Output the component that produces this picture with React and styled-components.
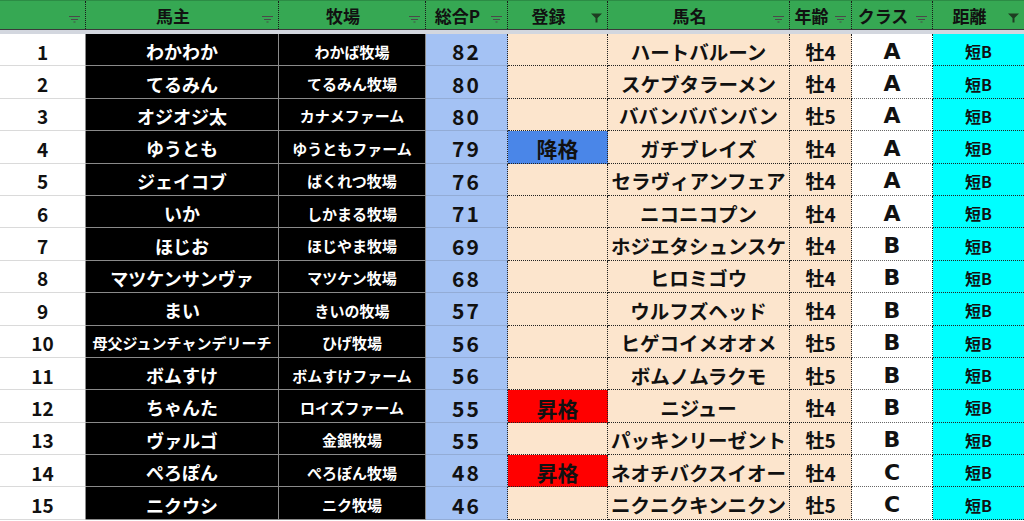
import React from 'react';
import styled, { createGlobalStyle } from 'styled-components';

const GlobalStyle = createGlobalStyle`
  html, body {
    margin: 0;
    padding: 0;
    background: #ffffff;
    overflow: hidden;
  }
  body {
    font-family: "Noto Sans CJK JP", "Noto Sans", sans-serif;
  }
`;

// column layout: widths and per-column cell look
const COLS = [
  { key: 'no', title: '', w: 86, bg: '#ffffff', size: 19, bottom: '1px solid #dadada', right: '1px solid #8a8a8a', icon: 'lines' },
  { key: 'owner', title: '馬主', w: 193, bg: '#000000', color: '#fff', size: 18, bottom: '1px solid #8a8a8a', right: '1px solid #8a8a8a', icon: 'lines' },
  { key: 'farm', title: '牧場', w: 147, bg: '#000000', color: '#fff', size: 15, bottom: '1px solid #8a8a8a', right: '1px solid #8a8a8a', icon: 'lines' },
  { key: 'pts', title: '総合P', w: 82, bg: '#a4c2f4', size: 21, bottom: '1px solid #93acd6', right: '1px dotted #222', icon: 'lines' },
  { key: 'reg', title: '登録', w: 100, bg: '#fce5cd', size: 21, bottom: '1px dotted #222', right: '1px dotted #222', icon: 'funnel' },
  { key: 'name', title: '馬名', w: 182, bg: '#fce5cd', size: 19.5, bottom: '1px dotted #222', right: '1px dotted #222', icon: 'lines' },
  { key: 'age', title: '年齢', w: 62, bg: '#fce5cd', size: 19, bottom: '1px dotted #222', right: '1px dotted #222', icon: 'lines' },
  { key: 'cls', title: 'クラス', w: 81, bg: '#ffffff', size: 22, bottom: '1px dotted #666', right: '1px dotted #222', icon: 'lines', latin: true },
  { key: 'dist', title: '距離', w: 91, bg: '#00ffff', size: 16, bottom: '1px dotted #222', right: 'none', icon: 'funnel' },
];

const ROWS = [
  [1, 'わかわか', 'わかば牧場', 82, '', 'ハートバルーン', '牡4', 'A', '短B'],
  [2, 'てるみん', 'てるみん牧場', 80, '', 'スケブタラーメン', '牡4', 'A', '短B'],
  [3, 'オジオジ太', 'カナメファーム', 80, '', 'ババンババンバン', '牡5', 'A', '短B'],
  [4, 'ゆうとも', 'ゆうともファーム', 79, '降格', 'ガチブレイズ', '牡4', 'A', '短B'],
  [5, 'ジェイコブ', 'ばくれつ牧場', 76, '', 'セラヴィアンフェア', '牡4', 'A', '短B'],
  [6, 'いか', 'しかまる牧場', 71, '', 'ニコニコプン', '牡4', 'A', '短B'],
  [7, 'ほじお', 'ほじやま牧場', 69, '', 'ホジエタシュンスケ', '牡4', 'B', '短B'],
  [8, 'マツケンサンヴァ', 'マツケン牧場', 68, '', 'ヒロミゴウ', '牡4', 'B', '短B'],
  [9, 'まい', 'きいの牧場', 57, '', 'ウルフズヘッド', '牡4', 'B', '短B'],
  [10, '母父ジュンチャンデリーチ', 'ひげ牧場', 56, '', 'ヒゲコイメオオメ', '牡5', 'B', '短B'],
  [11, 'ボムすけ', 'ボムすけファーム', 56, '', 'ボムノムラクモ', '牡5', 'B', '短B'],
  [12, 'ちゃんた', 'ロイズファーム', 55, '昇格', 'ニジュー', '牡4', 'B', '短B'],
  [13, 'ヴァルゴ', '金銀牧場', 55, '', 'パッキンリーゼント', '牡5', 'B', '短B'],
  [14, 'ぺろぽん', 'ぺろぽん牧場', 48, '昇格', 'ネオチバクスイオー', '牡4', 'C', '短B'],
  [15, 'ニクウシ', 'ニク牧場', 46, '', 'ニクニクキンニクン', '牡5', 'C', '短B'],
];

const BADGE = { '降格': '#4a86e8', '昇格': '#ff0000' };

const GRID = COLS.map(c => `${c.w}px`).join(' ');

const Sheet = styled.div`
  width: 1024px;
  display: flex;
  flex-direction: column;
`;

const HeaderRow = styled.div`
  display: grid;
  grid-template-columns: ${GRID};
  height: 30px;
  box-sizing: border-box;
  background: #36a853;
  border-top: 1px solid #2c8c45;
  border-bottom: 1px solid #3a3a3a;
`;

const HeadCell = styled.div`
  position: relative;
  display: flex;
  align-items: center;
  justify-content: center;
  padding-right: 18px;
  box-sizing: border-box;
  border-right: ${p => (p.$last ? 'none' : '1px dotted #1a1a1a')};
  font-size: 17px;
  font-weight: 700;
  color: #111;
  white-space: nowrap;
`;

const IconSlot = styled.span`
  position: absolute;
  right: 5px;
  bottom: 6px;
  display: flex;
`;

const Divider = styled.div`
  height: 4px;
  background: #d3d7df;
`;

const Body = styled.div`
  display: grid;
  grid-template-columns: ${GRID};
  grid-auto-rows: 32.4px;
`;

const Cell = styled.div`
  display: flex;
  align-items: center;
  justify-content: center;
  box-sizing: border-box;
  padding-top: 3px;
  background: ${p => p.$bg};
  color: ${p => p.$color || '#111'};
  font-size: ${p => p.$size}px;
  font-weight: 700;
  border-bottom: ${p => p.$bottom};
  border-right: ${p => p.$right};
  white-space: nowrap;
  overflow: hidden;
  font-family: ${p => (p.$latin ? '"DejaVu Sans", Verdana, sans-serif' : 'inherit')};
  letter-spacing: ${p => p.$spacing || 0}px;
`;

const LinesIcon = () => (
  <svg width="11" height="8" viewBox="0 0 11 8">
    <path d="M0 1.5h11M2 4.5h7M4.5 7h2" stroke="#4a4a4a" strokeWidth="1" fill="none" />
  </svg>
);

const FunnelIcon = () => (
  <svg width="11" height="10" viewBox="0 0 11 10">
    <path d="M0 0.5h11L6.5 5v4.5h-2V5z" fill="#1e3d22" />
  </svg>
);

// per-value tweaks (Excel shrink-to-fit on the long owner name)
const cellText = (col, value) => {
  if (col.key === 'owner' && String(value).length > 10) return { size: 15 };
  if (col.key === 'pts') return { spacing: 2 };
  return {};
};

export default function App() {
  return (
    <>
      <GlobalStyle />
      <Sheet>
        <HeaderRow>
          {COLS.map((c, i) => (
            <HeadCell key={c.key} $last={i === COLS.length - 1}>
              {c.title}
              <IconSlot>{c.icon === 'funnel' ? <FunnelIcon /> : <LinesIcon />}</IconSlot>
            </HeadCell>
          ))}
        </HeaderRow>
        <Divider />
        <Body>
          {ROWS.map(row =>
            COLS.map((c, i) => {
              const v = row[i];
              const extra = cellText(c, v);
              const bg = c.key === 'reg' && BADGE[v] ? BADGE[v] : c.bg;
              return (
                <Cell
                  key={`${row[0]}-${c.key}`}
                  $bg={bg}
                  $color={c.color}
                  $size={extra.size || c.size}
                  $bottom={c.bottom}
                  $right={c.right}
                  $latin={c.latin}
                  $spacing={extra.spacing}
                >
                  {v}
                </Cell>
              );
            })
          )}
        </Body>
      </Sheet>
    </>
  );
}
